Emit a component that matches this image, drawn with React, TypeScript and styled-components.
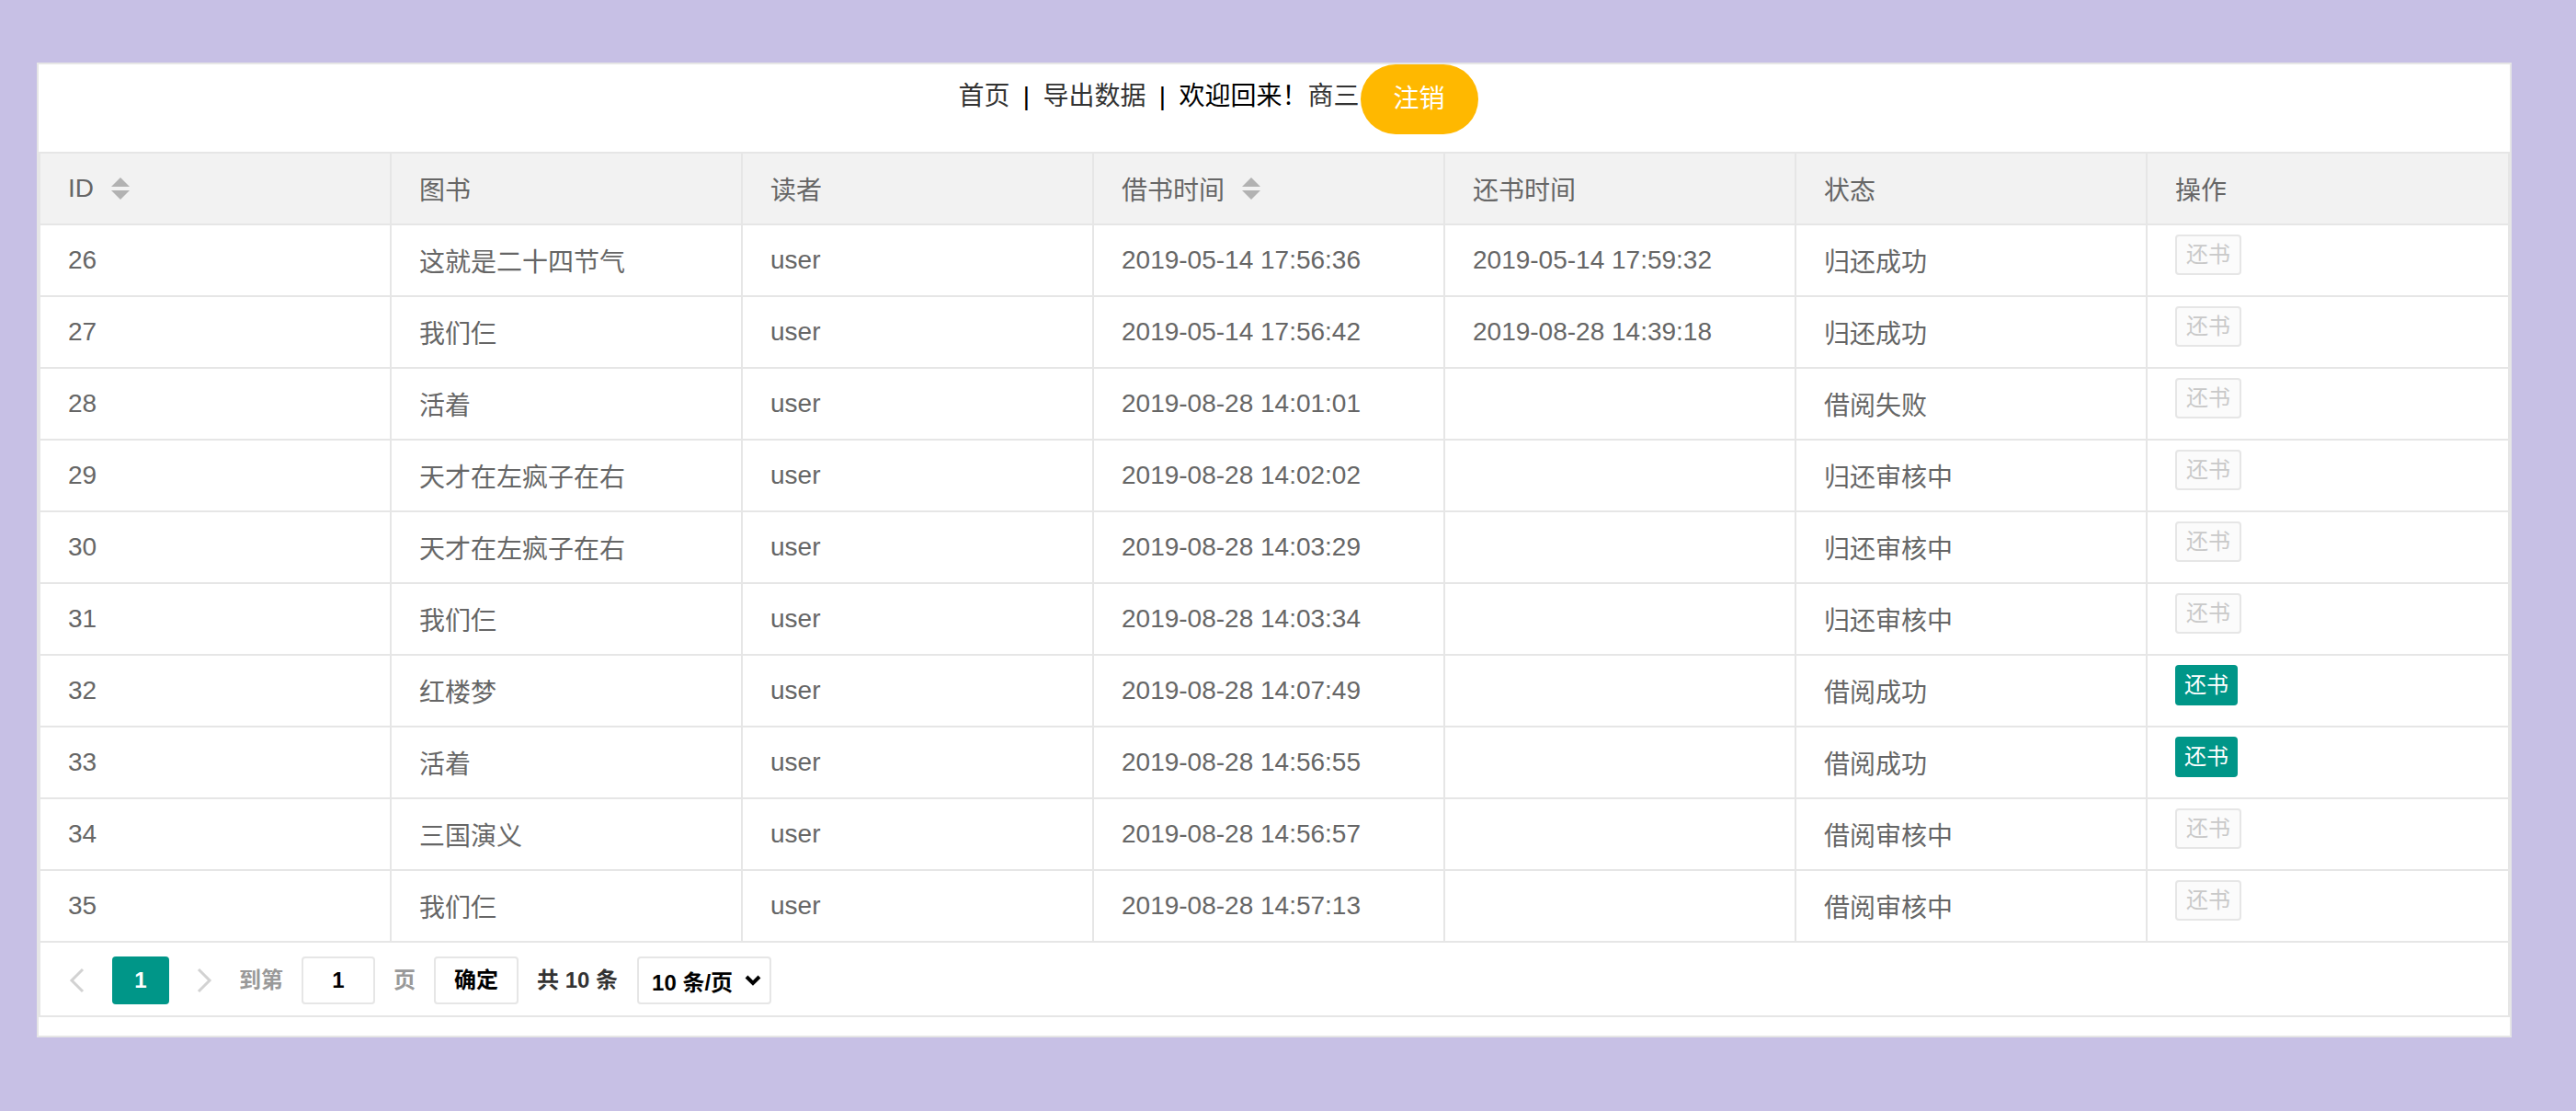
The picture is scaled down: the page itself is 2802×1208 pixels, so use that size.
import React from "react";
import styled, { createGlobalStyle } from "styled-components";

const GlobalStyle = createGlobalStyle`
  *, *::before, *::after { box-sizing: border-box; }
  html, body { margin: 0; padding: 0; background: #c7c0e5; }
  body {
    font-family: "Liberation Sans", Arial, "Noto Sans CJK SC", sans-serif;
  }
`;

const Page = styled.div`
  min-height: 1208px;
  padding: 68px 70px 0 40px;
`;

const Panel = styled.div`
  background: #fff;
  border: 2px solid #e6e6e6;
  padding-bottom: 20px;
`;

const Nav = styled.div`
  display: flex;
  align-items: center;
  justify-content: center;
  height: 76px;
  padding-right: 122px;
  font-size: 28px;
  color: #000;
`;

const NavText = styled.span`
  display: flex;
  align-items: center;
  padding-bottom: 7px;
  line-height: 40px;
  white-space: nowrap;
`;

const NavLink = styled.a`
  color: #333;
  text-decoration: none;
`;

const Sep = styled.span`
  display: inline-block;
  width: 36px;
  text-align: center;
  color: #000;
`;

const LogoutButton = styled.button`
  height: 76px;
  line-height: 76px;
  padding: 0 36px;
  margin-left: 1px;
  border: none;
  border-radius: 100px;
  background: #ffb800;
  color: #fff;
  font-size: 28px;
  font-family: inherit;
  white-space: nowrap;
`;

const Table = styled.div`
  margin-top: 19px;
  border: 2px solid #e6e6e6;
`;

const Row = styled.div<{ $head?: boolean }>`
  display: grid;
  grid-template-columns: repeat(6, 382px) 1fr;
  background: ${(p) => (p.$head ? "#f2f2f2" : "#fff")};
  border-bottom: 2px solid #e6e6e6;
`;

const Cell = styled.div<{ $action?: boolean }>`
  height: 76px;
  padding: ${(p) => (p.$action ? "10px 30px 0" : "0 30px")};
  display: flex;
  align-items: ${(p) => (p.$action ? "flex-start" : "center")};
  border-right: 2px solid #e6e6e6;
  font-size: 28px;
  color: #666;
  white-space: nowrap;
  &:last-child {
    border-right: none;
  }
`;

const Sort = styled.span`
  display: inline-flex;
  flex-direction: column;
  gap: 4px;
  margin-left: 19px;
  &::before,
  &::after {
    content: "";
    display: block;
    width: 0;
    height: 0;
    border-left: 10px solid transparent;
    border-right: 10px solid transparent;
  }
  &::before {
    border-bottom: 10px solid #b2b2b2;
  }
  &::after {
    border-top: 10px solid #b2b2b2;
  }
`;

const ReturnButton = styled.button<{ $disabled?: boolean }>`
  height: 44px;
  width: ${(p) => (p.$disabled ? "72px" : "68px")};
  padding: 0;
  border: ${(p) => (p.$disabled ? "2px solid #e6e6e6" : "none")};
  border-radius: 4px;
  background: ${(p) => (p.$disabled ? "#fbfbfb" : "#009688")};
  color: ${(p) => (p.$disabled ? "#c9c9c9" : "#fff")};
  font-size: 24px;
  font-family: inherit;
  line-height: 40px;
  text-align: center;
`;

const Pager = styled.div`
  height: 79px;
  display: flex;
  align-items: flex-start;
  padding: 15px 0 0 14px;
  font-size: 24px;
  font-weight: bold;
  color: #333;
`;

const Arrow = styled.span<{ $gapLeft?: number }>`
  width: 52px;
  height: 52px;
  display: flex;
  align-items: center;
  justify-content: center;
  margin-left: ${(p) => p.$gapLeft ?? 0}px;
`;

const CurrentPage = styled.span`
  width: 62px;
  height: 52px;
  margin-left: 12px;
  border-radius: 4px;
  background: #009688;
  color: #fff;
  line-height: 52px;
  text-align: center;
`;

const PagerText = styled.span<{ $gap: number; $muted?: boolean }>`
  height: 52px;
  line-height: 52px;
  margin-left: ${(p) => p.$gap}px;
  color: ${(p) => (p.$muted ? "#999" : "#333")};
  white-space: nowrap;
`;

const PagerBox = styled.span<{ $width: number; $gap: number }>`
  width: ${(p) => p.$width}px;
  height: 52px;
  margin-left: ${(p) => p.$gap}px;
  border: 2px solid #e6e6e6;
  border-radius: 4px;
  background: #fff;
  color: #000;
  line-height: 48px;
  text-align: center;
  white-space: nowrap;
`;

const SelectBox = styled.span`
  width: 146px;
  height: 52px;
  margin-left: 21px;
  border: 2px solid #e6e6e6;
  border-radius: 4px;
  background: #fff;
  color: #000;
  display: flex;
  align-items: center;
  justify-content: space-between;
  padding: 0 8px 0 14px;
  white-space: nowrap;
`;

type Rec = {
  id: number;
  book: string;
  reader: string;
  borrow: string;
  back: string;
  status: string;
  active: boolean;
};

const rows: Rec[] = [
  { id: 26, book: "这就是二十四节气", reader: "user", borrow: "2019-05-14 17:56:36", back: "2019-05-14 17:59:32", status: "归还成功", active: false },
  { id: 27, book: "我们仨", reader: "user", borrow: "2019-05-14 17:56:42", back: "2019-08-28 14:39:18", status: "归还成功", active: false },
  { id: 28, book: "活着", reader: "user", borrow: "2019-08-28 14:01:01", back: "", status: "借阅失败", active: false },
  { id: 29, book: "天才在左疯子在右", reader: "user", borrow: "2019-08-28 14:02:02", back: "", status: "归还审核中", active: false },
  { id: 30, book: "天才在左疯子在右", reader: "user", borrow: "2019-08-28 14:03:29", back: "", status: "归还审核中", active: false },
  { id: 31, book: "我们仨", reader: "user", borrow: "2019-08-28 14:03:34", back: "", status: "归还审核中", active: false },
  { id: 32, book: "红楼梦", reader: "user", borrow: "2019-08-28 14:07:49", back: "", status: "借阅成功", active: true },
  { id: 33, book: "活着", reader: "user", borrow: "2019-08-28 14:56:55", back: "", status: "借阅成功", active: true },
  { id: 34, book: "三国演义", reader: "user", borrow: "2019-08-28 14:56:57", back: "", status: "借阅审核中", active: false },
  { id: 35, book: "我们仨", reader: "user", borrow: "2019-08-28 14:57:13", back: "", status: "借阅审核中", active: false },
];

const Chevron = ({ dir }: { dir: "left" | "right" }) => (
  <svg width="18" height="28" viewBox="0 0 18 28" fill="none">
    <polyline
      points={dir === "left" ? "15,2 3,14 15,26" : "3,2 15,14 3,26"}
      stroke="#d2d2d2"
      strokeWidth="3"
      strokeLinejoin="miter"
    />
  </svg>
);

const DownCaret = () => (
  <svg width="20" height="14" viewBox="0 0 20 14" fill="none">
    <polyline points="3,3 10,10 17,3" stroke="#000" strokeWidth="4" />
  </svg>
);

export default function App() {
  return (
    <>
      <GlobalStyle />
      <Page>
        <Panel>
          <Nav>
            <NavText>
              <NavLink>首页</NavLink>
              <Sep>|</Sep>
              <NavLink>导出数据</NavLink>
              <Sep>|</Sep>
              <span>欢迎回来！</span>
              <NavLink>商三</NavLink>
            </NavText>
            <LogoutButton>注销</LogoutButton>
          </Nav>
          <Table>
            <Row $head>
              <Cell>
                ID<Sort />
              </Cell>
              <Cell>图书</Cell>
              <Cell>读者</Cell>
              <Cell>
                借书时间<Sort />
              </Cell>
              <Cell>还书时间</Cell>
              <Cell>状态</Cell>
              <Cell>操作</Cell>
            </Row>
            {rows.map((r) => (
              <Row key={r.id}>
                <Cell>{r.id}</Cell>
                <Cell>{r.book}</Cell>
                <Cell>{r.reader}</Cell>
                <Cell>{r.borrow}</Cell>
                <Cell>{r.back}</Cell>
                <Cell>{r.status}</Cell>
                <Cell $action>
                  <ReturnButton $disabled={!r.active}>还书</ReturnButton>
                </Cell>
              </Row>
            ))}
            <Pager>
              <Arrow>
                <Chevron dir="left" />
              </Arrow>
              <CurrentPage>1</CurrentPage>
              <Arrow $gapLeft={12}>
                <Chevron dir="right" />
              </Arrow>
              <PagerText $gap={12} $muted>
                到第
              </PagerText>
              <PagerBox $width={80} $gap={20}>
                1
              </PagerBox>
              <PagerText $gap={20} $muted>
                页
              </PagerText>
              <PagerBox $width={92} $gap={20}>
                确定
              </PagerBox>
              <PagerText $gap={20}>共 10 条</PagerText>
              <SelectBox>
                <span>10 条/页</span>
                <DownCaret />
              </SelectBox>
            </Pager>
          </Table>
        </Panel>
      </Page>
    </>
  );
}
